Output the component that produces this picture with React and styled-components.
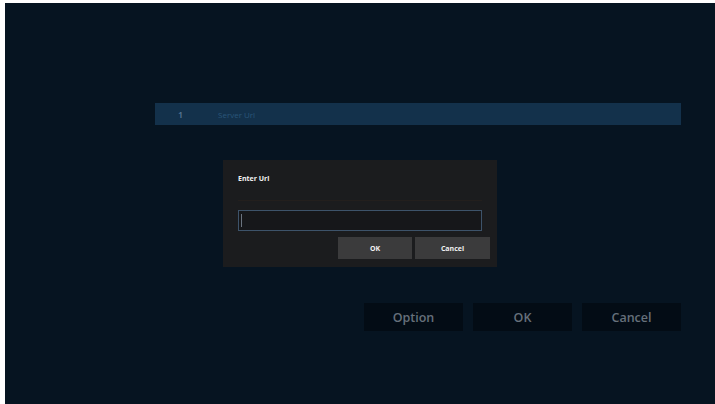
import React from 'react';
import styled, { createGlobalStyle } from 'styled-components';

const Global = createGlobalStyle`
  html, body {
    margin: 0;
    padding: 0;
    background: #ffffff;
    font-family: "Open Sans", "Noto Sans", sans-serif;
  }
`;

const Screen = styled.div`
  position: relative;
  box-sizing: border-box;
  margin: 3px 0 0 5px;
  width: 710px;
  height: 401px;
  background: #061421;
  padding: 100px 34px 0 150px;
  display: flex;
  flex-direction: column;
`;

const ListRow = styled.div`
  height: 22px;
  background: #13314b;
  display: flex;
  align-items: center;
  font-size: 8px;
`;

const Index = styled.span`
  width: 25px;
  margin-left: 23px;
  color: #5a7a96;
  font-size: 9px;
  font-weight: 600;
`;

const Label = styled.span`
  margin-left: 15px;
  color: #2a5679;
`;

const ActionBar = styled.div`
  margin-top: 178px;
  display: flex;
  justify-content: flex-end;
  gap: 10px;
`;

const ActionButton = styled.div`
  width: 99px;
  height: 28px;
  background: #030c15;
  color: #66707b;
  font-size: 12.5px;
  font-weight: 600;
  display: flex;
  align-items: center;
  justify-content: center;
`;

const Dialog = styled.div`
  position: absolute;
  left: 218px;
  top: 157px;
  width: 274px;
  height: 107px;
  box-sizing: border-box;
  background: #1b1c1e;
  padding: 14px 7px 0 15px;
  display: flex;
  flex-direction: column;
`;

const DialogTitle = styled.div`
  color: #f2f2f2;
  font-size: 7px;
  font-weight: 700;
  padding-bottom: 17px;
  border-bottom: 1px solid #231f1d;
  margin-right: 8px;
`;

const UrlInput = styled.div`
  margin-top: 9px;
  margin-right: 8px;
  height: 21px;
  box-sizing: border-box;
  border: 1px solid #3d536a;
  background: #16171a;
  display: flex;
  align-items: center;
  padding-left: 2px;
`;

const Caret = styled.div`
  width: 1px;
  height: 13px;
  background: #6b7480;
`;

const DialogButtons = styled.div`
  margin-top: 6px;
  display: flex;
  justify-content: flex-end;
  gap: 3px;
`;

const DialogButton = styled.div`
  width: ${p => p.$w}px;
  height: 22px;
  background: #3b3b3c;
  color: #f0f0f0;
  font-size: 7px;
  font-weight: 700;
  display: flex;
  align-items: center;
  justify-content: center;
`;

export default function App() {
  return (
    <>
      <Global />
      <Screen>
        <ListRow>
          <Index>1</Index>
          <Label>Server Url</Label>
        </ListRow>
        <ActionBar>
          <ActionButton>Option</ActionButton>
          <ActionButton>OK</ActionButton>
          <ActionButton>Cancel</ActionButton>
        </ActionBar>
        <Dialog>
          <DialogTitle>Enter Url</DialogTitle>
          <UrlInput>
            <Caret />
          </UrlInput>
          <DialogButtons>
            <DialogButton $w={74}>OK</DialogButton>
            <DialogButton $w={75}>Cancel</DialogButton>
          </DialogButtons>
        </Dialog>
      </Screen>
    </>
  );
}
